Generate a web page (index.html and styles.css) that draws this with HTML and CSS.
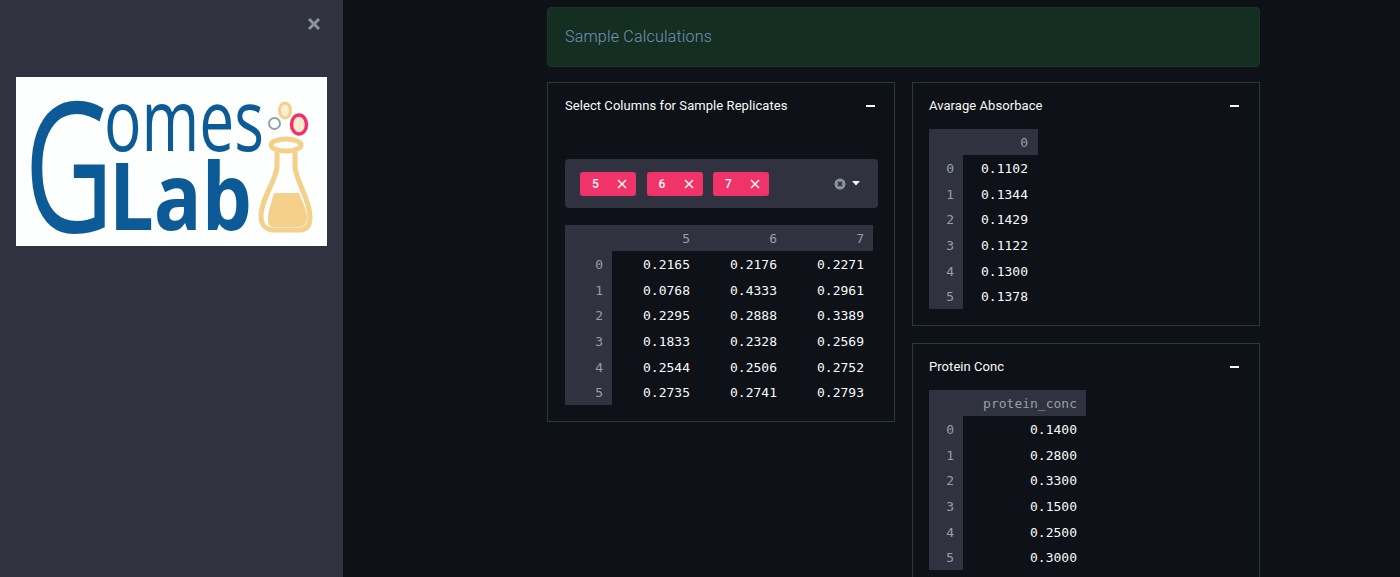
FILE: index.html
```html
<!DOCTYPE html>
<html lang="en">
<head>
  <meta charset="UTF-8">
  <meta name="viewport" content="width=device-width, initial-scale=1.0">
  <title>Sample Calculations</title>
  <link rel="stylesheet" href="styles.css">
</head>
<body>
  <div class="app">
    <aside class="sidebar">
      <div class="sidebar-top">
        <svg class="close-icon" viewBox="0 0 14 14"><path d="M2 2l10 10M12 2L2 12"/></svg>
      </div>
      <svg class="logo" viewBox="16 77 311 169">
        <rect x="16" y="77" width="311" height="169" fill="#fdfefe"/>
        <g fill="#0d5b96" font-family="'Open Sans', sans-serif">
          <text transform="translate(24 232) scale(0.68 1)" font-size="182" font-weight="500">G</text>
          <text x="104" y="151" font-size="86" textLength="160" lengthAdjust="spacingAndGlyphs">omes</text>
          <text x="109" y="230" font-size="93" font-weight="700" textLength="143" lengthAdjust="spacingAndGlyphs">Lab</text>
        </g>
        <g fill="none" stroke="#f4d08a" stroke-width="5">
          <ellipse cx="286" cy="145" rx="15" ry="6"/>
          <path d="M277 152v14c0 14-16 32-16 50 0 9 5 14 13 14h25c8 0 11-5 11-13 0-18-15-37-15-51v-14"/>
        </g>
        <path d="M274 193h25c3 8 8 17 8 24 0 6-3 10-8 10h-26c-4 0-5-4-5-8 0-8 4-18 6-26z" fill="#f4d08a"/>
        <ellipse cx="285" cy="110.500" rx="5.500" ry="7.500" fill="#fbecd2" stroke="#f4d08a" stroke-width="3"/>
        <circle cx="274.500" cy="123.500" r="5.500" fill="none" stroke="#8fa3ad" stroke-width="2"/>
        <ellipse cx="299" cy="124.500" rx="7.500" ry="9.500" fill="#fbe9d0" stroke="#ef3368" stroke-width="3.500"/>
      </svg>
    </aside>

    <main class="content">
      <div class="banner">Sample Calculations</div>

      <div class="columns">
        <div class="column column-left">
          <section class="card">
            <header class="card-head">
              <span>Select Columns for Sample Replicates</span>
              <i class="minus"></i>
            </header>
            <div class="select">
              <span class="tag">5<svg viewBox="0 0 10 10"><path d="M1 1l8 8M9 1l-8 8"/></svg></span>
              <span class="tag">6<svg viewBox="0 0 10 10"><path d="M1 1l8 8M9 1l-8 8"/></svg></span>
              <span class="tag">7<svg viewBox="0 0 10 10"><path d="M1 1l8 8M9 1l-8 8"/></svg></span>
              <svg class="clear" viewBox="0 0 12 12"><circle cx="6" cy="6" r="5.500"/><path d="M4 4l4 4M8 4l-4 4"/></svg>
              <svg class="caret" viewBox="0 0 8 5"><path d="M0 0h8L4 4.500z"/></svg>
            </div>
            <div class="frame frame-wide">
              <div class="th"></div><div class="th">5</div><div class="th">6</div><div class="th">7</div>
              <div class="idx">0</div><div>0.2165</div><div>0.2176</div><div>0.2271</div>
              <div class="idx">1</div><div>0.0768</div><div>0.4333</div><div>0.2961</div>
              <div class="idx">2</div><div>0.2295</div><div>0.2888</div><div>0.3389</div>
              <div class="idx">3</div><div>0.1833</div><div>0.2328</div><div>0.2569</div>
              <div class="idx">4</div><div>0.2544</div><div>0.2506</div><div>0.2752</div>
              <div class="idx">5</div><div>0.2735</div><div>0.2741</div><div>0.2793</div>
            </div>
          </section>
        </div>

        <div class="column column-right">
          <section class="card">
            <header class="card-head">
              <span>Avarage Absorbace</span>
              <i class="minus"></i>
            </header>
            <div class="frame frame-single">
              <div class="th"></div><div class="th">0</div>
              <div class="idx">0</div><div>0.1102</div>
              <div class="idx">1</div><div>0.1344</div>
              <div class="idx">2</div><div>0.1429</div>
              <div class="idx">3</div><div>0.1122</div>
              <div class="idx">4</div><div>0.1300</div>
              <div class="idx">5</div><div>0.1378</div>
            </div>
          </section>

          <section class="card">
            <header class="card-head">
              <span>Protein Conc</span>
              <i class="minus"></i>
            </header>
            <div class="frame frame-conc">
              <div class="th"></div><div class="th">protein_conc</div>
              <div class="idx">0</div><div>0.1400</div>
              <div class="idx">1</div><div>0.2800</div>
              <div class="idx">2</div><div>0.3300</div>
              <div class="idx">3</div><div>0.1500</div>
              <div class="idx">4</div><div>0.2500</div>
              <div class="idx">5</div><div>0.3000</div>
            </div>
          </section>
        </div>
      </div>
    </main>
  </div>
</body>
</html>
```

FILE: styles.css
```css
html, body {
  height: 100%;
}

body {
  margin: 0;
  overflow: hidden;
  background-color: #0e1117;
  color: #fafafa;
  font-family: "Roboto", sans-serif;
}

.app {
  display: flex;
  height: 100vh;
  overflow: hidden;
}

.sidebar {
  flex: 0 0 343px;
  box-sizing: border-box;
  padding: 0 16px;
  background-color: #30333f;
}

.sidebar-top {
  display: flex;
  justify-content: flex-end;
  height: 77px;
  padding: 17px 6px 0 0;
  box-sizing: border-box;
}

.close-icon {
  width: 14px;
  height: 14px;
  fill: none;
  stroke: #87959c;
  stroke-width: 3;
}

.logo {
  display: block;
  width: 311px;
  height: 169px;
  overflow: visible;
}

.content {
  box-sizing: border-box;
  width: 917px;
  padding: 7px 0 0 204px;
}

.banner {
  box-sizing: border-box;
  height: 60px;
  padding-left: 17px;
  line-height: 58px;
  font-size: 16px;
  font-weight: 300;
  letter-spacing: 0.2px;
  color: #6f95b8;
  background-color: #152e22;
  border: 1px solid #1a3626;
  border-radius: 4px;
}

.columns {
  display: flex;
  gap: 17px;
  margin-top: 15px;
}

.column {
  flex: 0 0 348px;
  display: flex;
  flex-direction: column;
  gap: 17px;
}

.card {
  box-sizing: border-box;
  border: 1px solid #2a3a36;
}

.column-left .card {
  padding: 0 16px 16px 17px;
}

.column-right .card {
  padding: 0 17px 16px 16px;
}

.card-head {
  display: flex;
  align-items: center;
  justify-content: space-between;
  height: 46px;
  padding-right: 3px;
  font-size: 13px;
  letter-spacing: 0.06px;
}

.card-head span {
  padding-bottom: 2px;
}

.minus {
  width: 9px;
  height: 1.5px;
  background-color: #fafafa;
}

.select {
  display: flex;
  align-items: center;
  box-sizing: border-box;
  height: 49px;
  margin-top: 30px;
  padding: 0 18px 0 15px;
  background-color: #30333f;
  border-radius: 4px;
}

.tag {
  display: flex;
  align-items: center;
  justify-content: space-between;
  box-sizing: border-box;
  width: 56px;
  height: 24px;
  margin-right: 10.5px;
  padding: 0 9px 0 12px;
  font-size: 12px;
  font-weight: 500;
  background-color: #f03368;
  border-radius: 3px;
}

.tag svg {
  width: 10px;
  height: 10px;
  fill: none;
  stroke: #fafafa;
  stroke-width: 1.5;
}

.clear {
  width: 12px;
  height: 12px;
  margin-left: auto;
}

.clear circle {
  fill: #87959c;
}

.clear path {
  fill: none;
  stroke: #30333f;
  stroke-width: 1.8;
}

.caret {
  width: 8px;
  height: 5px;
  margin-left: 6px;
  fill: #fafafa;
}

.frame {
  display: grid;
  grid-template-rows: 26px repeat(6, 25.67px);
  height: 180px;
  font-family: "DejaVu Sans Mono", monospace;
  font-size: 13px;
  line-height: 25px;
  text-align: right;
}

.frame > div {
  box-sizing: border-box;
  padding: 1px 9px 0 0;
}

.frame-wide {
  grid-template-columns: 47px repeat(3, 87px);
  margin-top: 17px;
}

.frame-single {
  grid-template-columns: 34px 75px;
}

.frame-single > div:not(.idx) {
  padding-right: 10px;
}

.frame-conc {
  grid-template-columns: 34px 123px;
}

.th, .idx {
  color: #93a0a5;
  background-color: #30333f;
}
```
